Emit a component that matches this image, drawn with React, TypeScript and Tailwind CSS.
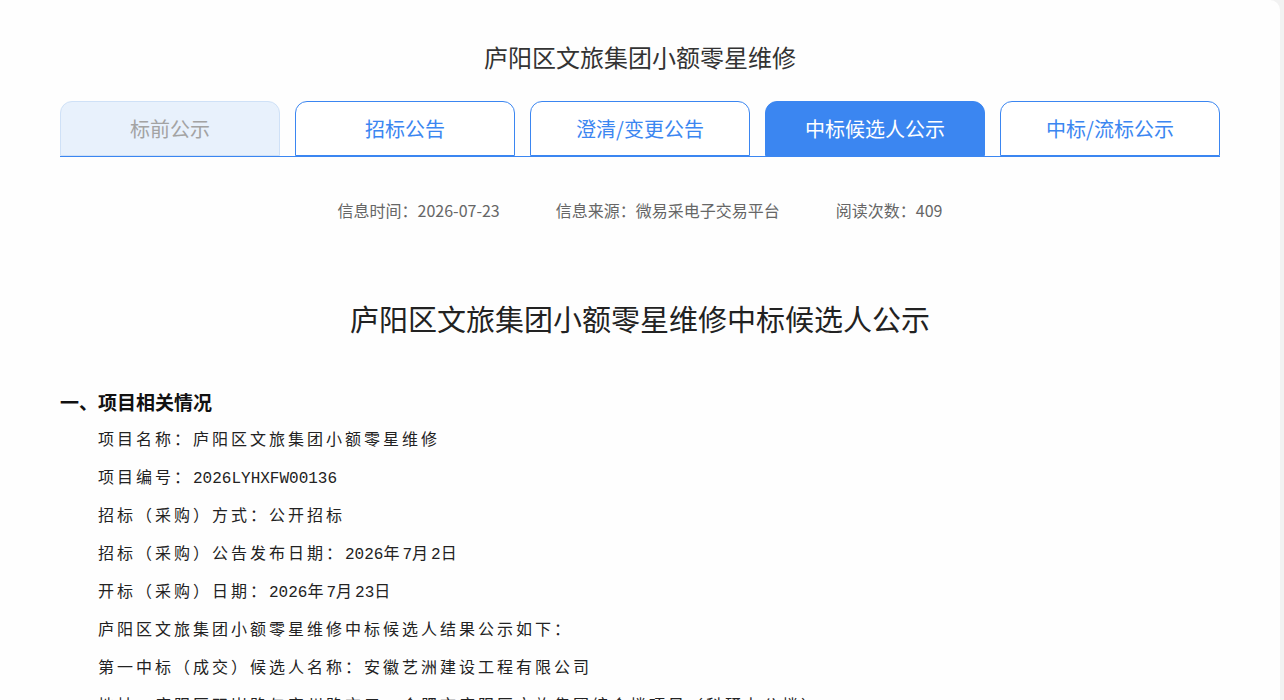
const TABS = [
  { label: "标前公示", state: "disabled" },
  { label: "招标公告", state: "normal" },
  { label: "澄清/变更公告", state: "normal" },
  { label: "中标候选人公示", state: "active" },
  { label: "中标/流标公示", state: "normal" },
];

const LINES = [
  "项目名称：庐阳区文旅集团小额零星维修",
  "项目编号：2026LYHXFW00136",
  "招标（采购）方式：公开招标",
  "招标（采购）公告发布日期：2026年7月2日",
  "开标（采购）日期：2026年7月23日",
  "庐阳区文旅集团小额零星维修中标候选人结果公示如下：",
  "第一中标（成交）候选人名称：安徽艺洲建设工程有限公司",
  "地址：庐阳区双岗路与宿州路交口，合肥市庐阳区文旅集团综合楼项目（科研办公楼）",
  "第二中标（成交）候选人名称：安徽华建建设工程有限公司",
];

const sans = "font-['Noto_Sans_CJK_SC','Noto_Sans',sans-serif]";

// ascii runs are set half-width and monospaced, like the Song face in the original
function Line({ text }: { text: string }) {
  const parts = text.split(/([\x20-\x7E]+)/).filter(Boolean);
  return (
    <p className="leading-[38px] whitespace-pre">
      {parts.map((p, i) =>
        /^[\x20-\x7E]+$/.test(p) ? (
          <span key={i} className="font-['Liberation_Mono',monospace] leading-none tracking-normal">
            {p}
          </span>
        ) : (
          <span key={i}>{p}</span>
        ),
      )}
    </p>
  );
}

export default function App() {
  return (
    <div className="flex min-h-screen bg-[#f2f2f2]">
      <div className={`w-[1280px] rounded-tr-[10px] bg-[#fefefe] px-[60px] pt-[38px] pb-10 ${sans}`}>
        <h1 className="text-center text-[24px] leading-[38px] text-[#333]">
          庐阳区文旅集团小额零星维修
        </h1>

        <div className="mt-[25px] flex gap-[15px] border-b border-[#3b86f1]">
          {TABS.map((t) => (
            <div
              key={t.label}
              className={
                "flex h-[55px] w-[220px] items-center justify-center rounded-t-[12px] border text-[20px] " +
                (t.state === "active"
                  ? "border-[#3b86f1] bg-[#3b86f1] text-white"
                  : t.state === "disabled"
                    ? "border-[#cfe1f7] bg-[#e8f1fc] text-[#a3a3a3]"
                    : "border-[#3b86f1] bg-white text-[#3b86f1]")
              }
            >
              {t.label}
            </div>
          ))}
        </div>

        <div className="mt-[41px] flex justify-center gap-[56px] text-[16px] leading-[24px] text-[#666]">
          <span>信息时间：2026-07-23</span>
          <span>信息来源：微易采电子交易平台</span>
          <span>阅读次数：409</span>
        </div>

        <h2 className="mt-[76px] text-center text-[29px] leading-[40px] text-[#222]">
          庐阳区文旅集团小额零星维修中标候选人公示
        </h2>

        <h3 className="mt-[52px] text-[19px] leading-[24px] font-bold text-[#111]">
          一、项目相关情况
        </h3>

        <div className="mt-[5px] pl-[38px] text-[16px] tracking-[3px] text-[#222]">
          {LINES.map((l) => (
            <Line key={l} text={l} />
          ))}
        </div>
      </div>
    </div>
  );
}
